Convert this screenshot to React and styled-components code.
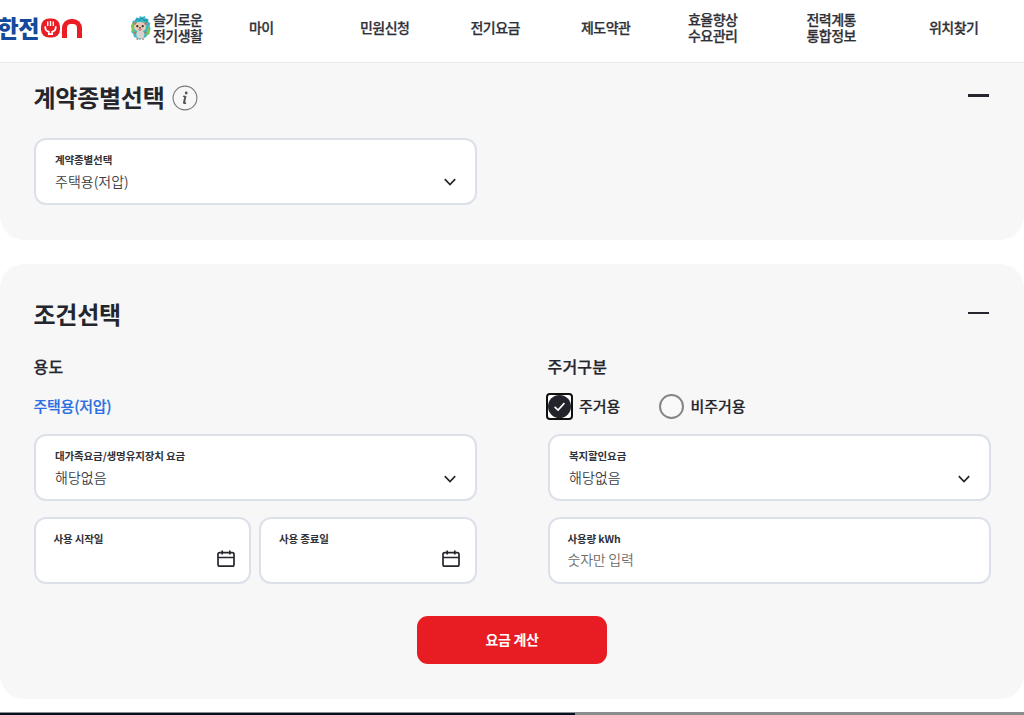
import React from "react";
import styled, { createGlobalStyle } from "styled-components";

const Global = createGlobalStyle`
  * { box-sizing: border-box; }
  html, body { margin: 0; background: #fff; overflow: hidden; }
  body, button, input {
    font-family: "Noto Sans CJK KR", "Noto Sans", sans-serif;
    color: #25262d;
  }
  h1, h2, h3, p { margin: 0; }
`;

const Page = styled.div`
  width: 1024px;
  height: 715px;
  display: flex;
  flex-direction: column;
  overflow: hidden;
`;

const Header = styled.header`
  height: 63px;
  flex: none;
  display: flex;
  align-items: center;
  padding-bottom: 6px;
  border-bottom: 1px solid #e8e8ee;
`;

const Logo = styled.a`
  width: 130px;
  height: 24px;
  display: flex;
  align-items: center;
  gap: 2px;
  overflow: hidden;
  flex: none;
`;

const LogoName = styled.span`
  width: 39px;
  display: flex;
  justify-content: flex-end;
  flex: none;
  color: #14499c;
  font-size: 23px;
  font-weight: 900;
  line-height: 22px;
  padding-bottom: 2px;
  letter-spacing: -0.4px;
  white-space: nowrap;
`;

const LogoArch = styled.span`
  width: 20px;
  height: 19px;
  border: 5.5px solid #ea1d25;
  border-bottom: 0;
  border-radius: 9px 9px 0 0;
`;

const Mascot = styled.svg`
  width: 22px;
  height: 26px;
  flex: none;
  margin: 0 1px 1px 0;
`;

const Nav = styled.nav`
  display: flex;
  align-items: center;
  margin-top: -1.5px;
`;

const NavItem = styled.a`
  flex: none;
  width: ${(p) => p.$width}px;
  margin-left: ${(p) => p.$gap}px;
  font-size: 14px;
  font-weight: 500;
  -webkit-text-stroke: 0.25px currentColor;
  letter-spacing: -0.55px;
  line-height: 16.5px;
  white-space: pre;
  color: #303138;
`;

const Panel = styled.section`
  flex: none;
  height: ${(p) => p.$height}px;
  margin-top: ${(p) => p.$offset || 0}px;
  padding: ${(p) => p.$top}px 33.5px 0;
  background: #f7f7f7;
  border-radius: ${(p) => p.$radius};
`;

const PanelHead = styled.div`
  height: 36px;
  display: flex;
  align-items: center;
  gap: 8px;
`;

const Title = styled.h2`
  font-size: 24px;
  font-weight: 700;
  line-height: 36px;
  letter-spacing: -0.25px;
  padding-bottom: ${(p) => p.$lift || 2}px;
  white-space: nowrap;
`;

const Collapse = styled.button`
  width: 21px;
  height: 2.5px;
  margin: 0 1.5px 5px auto;
  padding: 0;
  border: 0;
  background: #25262d;
`;

const Row = styled.div`
  display: grid;
  grid-template-columns: 443px 443px;
  column-gap: 71px;
  margin-top: ${(p) => p.$top || 0}px;
`;

const DateRow = styled.div`
  display: grid;
  grid-template-columns: 1fr 1fr;
  gap: 8px;
`;

const Field = styled.div`
  position: relative;
  height: 67px;
  margin-bottom: 0.5px;
  padding: ${(p) => (p.$inset ? "12px 18px" : "12px 19.5px")};
  border: 2px solid #dce1e9;
  border-radius: 12px;
  background: #fff;
`;

const FieldLabel = styled.p`
  font-size: 10.5px;
  font-weight: 700;
  line-height: 15px;
  letter-spacing: -0.13px;
  color: #303138;
  white-space: nowrap;
`;

const FieldValue = styled.p`
  margin-top: ${(p) => (p.$muted ? 3 : 4)}px;
  font-size: 14px;
  font-weight: 350;
  line-height: 20px;
  letter-spacing: ${(p) => (p.$muted ? -0.25 : 0)}px;
  color: ${(p) => (p.$muted ? "#6c6c6c" : "#3c3d42")};
  white-space: nowrap;
`;

const FieldIcon = styled.svg`
  position: absolute;
  right: ${(p) => p.$right}px;
  bottom: ${(p) => p.$bottom}px;
`;

const SubTitle = styled.h3`
  margin: -1px 0 1px;
  font-size: 16px;
  font-weight: 500;
  -webkit-text-stroke: 0.25px currentColor;
  letter-spacing: 0.2px;
  line-height: 24px;
`;

const Usage = styled.p`
  margin: -1px 0 1px;
  font-size: 15px;
  font-weight: 500;
  -webkit-text-stroke: 0.2px currentColor;
  line-height: 27px;
  letter-spacing: -0.25px;
  color: #2b6fe3;
`;

const RadioGroup = styled.div`
  display: flex;
  align-items: center;
  height: 27px;
  margin-left: -1.5px;
`;

const Radio = styled.label`
  display: flex;
  align-items: center;
  gap: ${(p) => p.$gap}px;
  margin-right: 38.5px;
  font-size: 15px;
  font-weight: 500;
  -webkit-text-stroke: 0.2px currentColor;
  letter-spacing: -0.1px;
  line-height: 25px;
`;

const RadioText = styled.span`
  padding-bottom: 2px;
`;

const RadioMark = styled.span`
  width: ${(p) => (p.$checked ? 27 : 25)}px;
  height: ${(p) => (p.$checked ? 27 : 25)}px;
  display: flex;
  align-items: center;
  justify-content: center;
  border: 2px solid ${(p) => (p.$checked ? "#101010" : "#858585")};
  border-radius: ${(p) => (p.$checked ? "4px" : "50%")};
  background: ${(p) => (p.$checked ? "#fff" : "#f9f9f9")};
`;

const Actions = styled.div`
  display: flex;
  justify-content: center;
  margin-top: 31.5px;
`;

const Submit = styled.button`
  width: 190px;
  height: 47.5px;
  padding: 0 0 2px;
  border: 0;
  border-radius: 11px;
  background: #e81d23;
  color: #fff;
  font-size: 14px;
  font-weight: 700;
  letter-spacing: -0.3px;
`;

const FooterStrip = styled.footer`
  height: 3px;
  flex: none;
  display: flex;
  margin-top: auto;
  background: #8b8b8b;
  border-top: 1px solid #8b8f92;
`;

const FooterProgress = styled.span`
  width: 575px;
  background: #04101f;
`;

const PlugIcon = () => (
  <svg width="19" height="20" viewBox="0 0 19 20">
    <rect x="0" y="0.5" width="19" height="19" rx="8" fill="#ea1d25" />
    <path d="M6.7 3.500v4.500M12.300 3.500v4.500M9.500 3v5" stroke="#fff" strokeWidth="1.400" />
    <path d="M4.300 8.300v1.700q.3 3.300 3.500 3.700v2.500h3.400v-2.500q3.200-.4 3.500-3.700V8.300" fill="none" stroke="#fff" strokeWidth="1.700" />
  </svg>
);

const MascotIcon = () => (
  <Mascot viewBox="0 0 22 26">
    <path d="M10 1l2 1 3-1 .5 2.500 3 .5-.3 2.500 2.300 2-1 2.600 1.200 2.400-1.400 2.600.2 3-2.500 1.200-1.500 2.400-3-.3L10 25l-3-2-3-1-.8-3-2-2 .6-3L1 11l1.300-2.500L2.500 6l2.700-.8L6 2.500l3 .4z" fill="#3bb9c8" />
    <path d="M2.400 8l2 1-1 2 1.500 2-1.700 1.800 2 1.800-.5 3-2-2.500-.9-3L1 11zM18.600 12l1.800 3-1.200 3-2.600 3.500-.4-4z" fill="#83c84b" />
    <path d="M5.300 6l2-2 2 1.400L12 3l2 2.500 3-.8-.5 3.800" fill="none" stroke="#18879d" />
    <ellipse cx="10" cy="11.800" rx="6.100" ry="4.900" fill="#e7cbb5" />
    <circle cx="4.800" cy="8.200" r="1.500" fill="#bb7d65" />
    <circle cx="15.800" cy="8.400" r="1.500" fill="#bb7d65" />
    <ellipse cx="10.300" cy="19.500" rx="4" ry="4.100" fill="#d7d2cd" />
    <path d="M7.300 23.200v1.600M13 23.200v1.600M6 17l-2 1.200M14.500 17l2 1" stroke="#a97765" strokeWidth="1.700" />
    <circle cx="7.300" cy="11.200" r="1.100" fill="#33272a" />
    <circle cx="12.700" cy="11.200" r="1.100" fill="#33272a" />
    <circle cx="10" cy="12.800" r=".9" fill="#493036" />
    <path d="M8.500 14.600q1.500 1.200 3 0" fill="none" stroke="#94535a" strokeWidth=".9" />
  </Mascot>
);

const InfoIcon = () => (
  <svg width="26" height="26" viewBox="0 0 26 26" fill="none">
    <circle cx="13" cy="13" r="11.900" stroke="#77787c" strokeWidth="1.100" />
    <circle cx="14.200" cy="8" r="1.400" fill="#55565b" />
    <path d="M10.900 11.300h2.300" stroke="#55565b" strokeWidth="1.200" />
    <path d="M13.500 11l-1.500 6.500q-.1 1 1.900.2" stroke="#55565b" strokeWidth="2" />
  </svg>
);

const Chevron = () => (
  <FieldIcon width="14" height="10" viewBox="0 0 14 10" $right={18} $bottom={15.5} fill="none">
    <path d="M1.800 2.200L7 7.500l5.200-5.300" stroke="#25262d" strokeWidth="1.700" />
  </FieldIcon>
);

const Calendar = () => (
  <FieldIcon width="20" height="20" viewBox="0 0 20 20" $right={13.5} $bottom={13.5} fill="none">
    <path d="M3.700 3.600h12.600q1.700 0 1.700 1.700v10.200q0 1.700-1.700 1.700H3.700q-1.700 0-1.700-1.700V5.300q0-1.700 1.700-1.700zM2 8.500h16M6.200 1.500v4M13.800 1.500v4" stroke="#25262d" strokeWidth="1.700" />
  </FieldIcon>
);

const CheckedDisc = () => (
  <svg width="23" height="23" viewBox="0 0 23 23" fill="none">
    <circle cx="11.500" cy="11.500" r="11.500" fill="#23242b" />
    <path d="M6.600 11.800l3.500 3.300 6.300-7" stroke="#fff" strokeWidth="1.600" />
  </svg>
);

const menu = [
  { text: "슬기로운\n전기생활", gap: 0, width: 50 },
  { text: "마이", gap: 46, width: 25 },
  { text: "민원신청", gap: 86, width: 50 },
  { text: "전기요금", gap: 60.5, width: 50 },
  { text: "제도약관", gap: 60.5, width: 50 },
  { text: "효율향상\n수요관리", gap: 57, width: 50 },
  { text: "전력계통\n통합정보", gap: 68.5, width: 50 },
  { text: "위치찾기", gap: 72.5, width: 50 },
];

const SelectField = ({ label, value }) => (
  <Field>
    <FieldLabel>{label}</FieldLabel>
    <FieldValue>{value}</FieldValue>
    <Chevron />
  </Field>
);

const DateField = ({ label }) => (
  <Field $inset>
    <FieldLabel>{label}</FieldLabel>
    <Calendar />
  </Field>
);

export default function App() {
  return (
    <Page>
      <Global />
      <Header>
        <Logo>
          <LogoName>한전</LogoName>
          <PlugIcon />
          <LogoArch />
        </Logo>
        <MascotIcon />
        <Nav>
          {menu.map((item) => (
            <NavItem key={item.text} $gap={item.gap} $width={item.width}>{item.text}</NavItem>
          ))}
        </Nav>
      </Header>

      <Panel $height={177} $top={17} $radius="0 0 24px 24px">
        <PanelHead>
          <Title>계약종별선택</Title>
          <InfoIcon />
          <Collapse aria-label="접기" />
        </PanelHead>
        <Row $top={21.5}>
          <SelectField label="계약종별선택" value="주택용(저압)" />
        </Row>
      </Panel>

      <Panel $height={435} $offset={24} $top={33.5} $radius="24px">
        <PanelHead>
          <Title $lift={4}>조건선택</Title>
          <Collapse aria-label="접기" />
        </PanelHead>
        <Row $top={21.5}>
          <SubTitle>용도</SubTitle>
          <SubTitle>주거구분</SubTitle>
        </Row>
        <Row $top={14}>
          <Usage>주택용(저압)</Usage>
          <RadioGroup>
            <Radio $gap={6}>
              <RadioMark $checked><CheckedDisc /></RadioMark>
              <RadioText>주거용</RadioText>
            </Radio>
            <Radio $gap={7}>
              <RadioMark />
              <RadioText>비주거용</RadioText>
            </Radio>
          </RadioGroup>
        </Row>
        <Row $top={14}>
          <SelectField label="대가족요금/생명유지장치 요금" value="해당없음" />
          <SelectField label="복지할인요금" value="해당없음" />
        </Row>
        <Row $top={15.5}>
          <DateRow>
            <DateField label="사용 시작일" />
            <DateField label="사용 종료일" />
          </DateRow>
          <Field $inset>
            <FieldLabel>사용량 kWh</FieldLabel>
            <FieldValue $muted>숫자만 입력</FieldValue>
          </Field>
        </Row>
        <Actions>
          <Submit>요금 계산</Submit>
        </Actions>
      </Panel>

      <FooterStrip>
        <FooterProgress />
      </FooterStrip>
    </Page>
  );
}
